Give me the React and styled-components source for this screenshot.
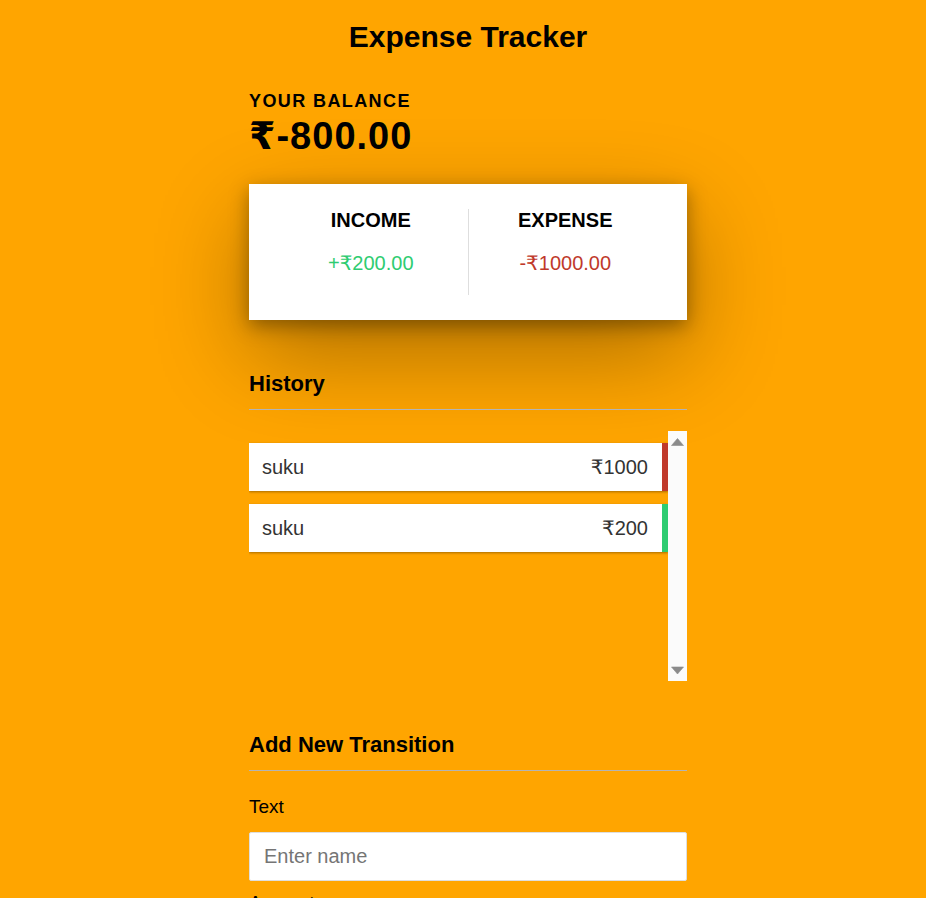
import React from "react";
import styled, { createGlobalStyle } from "styled-components";

const GlobalStyle = createGlobalStyle`
  html {
    scrollbar-width: none;
  }
  body {
    margin: 0;
    padding: 20px 0 0 10px;
    background-color: #ffa500;
    font-family: "Liberation Sans", Arial, "DejaVu Sans", sans-serif;
    color: #000;
  }
  * {
    box-sizing: border-box;
  }
`;

const Container = styled.div`
  width: 438px;
  margin: 0 auto;
`;

const Title = styled.h2`
  margin: 0;
  font-size: 30px;
  line-height: 34px;
  font-weight: 700;
  text-align: center;
`;

const Caption = styled.h4`
  margin: 37px 0 0;
  font-size: 18px;
  line-height: 21px;
  font-weight: 700;
  letter-spacing: 1.4px;
  text-transform: uppercase;
`;

const Balance = styled.h1`
  margin: 3px 0 0;
  font-size: 38px;
  line-height: 42px;
  font-weight: 700;
  letter-spacing: 1px;
`;

const IncExp = styled.div`
  display: flex;
  margin-top: 27px;
  padding: 25px;
  background-color: #fff;
  box-shadow: 0 6px 18px rgba(0, 0, 0, 0.35), 0 34px 95px rgba(0, 0, 0, 0.32);
`;

const Column = styled.div`
  flex: 1;
  text-align: center;
  &:first-of-type {
    border-right: 1px solid #dedede;
  }
`;

const ColumnTitle = styled.h4`
  margin: 0;
  font-size: 20px;
  line-height: 23px;
  font-weight: 700;
  text-transform: uppercase;
`;

const Money = styled.p`
  margin: 20px 0 20px;
  font-size: 20px;
  line-height: 23px;
  color: ${(p) => (p.$plus ? "#2ecc71" : "#c0392b")};
`;

const SectionTitle = styled.h3`
  position: relative;
  margin: ${(p) => p.$top}px 0 0;
  padding-bottom: 13px;
  border-bottom: 1px solid #b4b4b4;
  font-size: 22px;
  line-height: 25px;
  font-weight: 700;
`;

const ScrollArea = styled.div`
  display: flex;
  height: 250px;
  margin-top: 21px;
`;

const List = styled.ul`
  flex: 1;
  list-style: none;
  margin: 0;
  padding: 12px 0 0;
  overflow-y: auto;
  scrollbar-width: none;
  display: flex;
  flex-direction: column;
  gap: 13px;
`;

const Item = styled.li`
  flex-shrink: 0;
  display: flex;
  justify-content: space-between;
  padding: 12px 14px 12px 13px;
  font-size: 20px;
  line-height: 24px;
  color: #333;
  background-color: #fff;
  border-right: 6px solid ${(p) => (p.$plus ? "#2ecc71" : "#c0392b")};
  box-shadow: 0 1px 3px rgba(0, 0, 0, 0.12), 0 1px 2px rgba(0, 0, 0, 0.24);
`;

const ScrollTrack = styled.div`
  width: 19px;
  display: flex;
  flex-direction: column;
  justify-content: space-between;
  background-color: #fbfbfb;
`;

const ScrollButton = styled.button`
  display: block;
  width: 19px;
  height: 19px;
  padding: 0;
  border: 0;
  background: transparent;
  svg {
    display: block;
  }
`;

const Form = styled.form`
  display: flex;
  flex-direction: column;
`;

const Label = styled.label`
  display: block;
  margin: ${(p) => p.$top}px 0 15px;
  font-size: 19px;
  line-height: 21px;
`;

const Input = styled.input`
  display: block;
  width: 100%;
  height: 49px;
  padding: 0 14px;
  border: 1px solid #dedede;
  border-radius: 2px;
  font-family: inherit;
  font-size: 20px;
  color: #333;
  outline: none;
  &::placeholder {
    color: #757575;
  }
`;

const Button = styled.button`
  display: block;
  width: 100%;
  margin: 14px 0 30px;
  padding: 12px;
  border: 0;
  background-color: #9c88ff;
  color: #fff;
  font-family: inherit;
  font-size: 18px;
  cursor: pointer;
`;

const transactions = [
  { id: 1, text: "suku", amount: -1000 },
  { id: 2, text: "suku", amount: 200 },
];

const Arrow = ({ up }) => (
  <svg width="19" height="19" viewBox="0 0 19 19">
    <polygon
      points={up ? "3.5,14.5 9.5,7.5 15.5,14.5" : "3.5,5 15.5,5 9.5,12"}
      fill="#8b8b8b"
      stroke="#8b8b8b"
      strokeWidth="0.6"
      strokeLinejoin="round"
    />
  </svg>
);

export default function App() {
  const income = transactions.filter((t) => t.amount > 0).reduce((a, t) => a + t.amount, 0);
  const expense = transactions.filter((t) => t.amount < 0).reduce((a, t) => a - t.amount, 0);
  const total = income - expense;

  return (
    <>
      <GlobalStyle />
      <Container>
        <Title>Expense Tracker</Title>
        <Caption>Your Balance</Caption>
        <Balance>₹{total.toFixed(2)}</Balance>

        <IncExp>
          <Column>
            <ColumnTitle>Income</ColumnTitle>
            <Money $plus>+₹{income.toFixed(2)}</Money>
          </Column>
          <Column>
            <ColumnTitle>Expense</ColumnTitle>
            <Money>-₹{expense.toFixed(2)}</Money>
          </Column>
        </IncExp>

        <SectionTitle $top={51}>History</SectionTitle>
        <ScrollArea>
          <List>
            {transactions.map((t) => (
              <Item key={t.id} $plus={t.amount > 0}>
                <span>{t.text}</span>
                <span>₹{Math.abs(t.amount)}</span>
              </Item>
            ))}
          </List>
          <ScrollTrack>
            <ScrollButton type="button" aria-label="Scroll up">
              <Arrow up />
            </ScrollButton>
            <ScrollButton type="button" aria-label="Scroll down">
              <Arrow />
            </ScrollButton>
          </ScrollTrack>
        </ScrollArea>

        <SectionTitle $top={51}>Add New Transition</SectionTitle>
        <Form onSubmit={(e) => e.preventDefault()}>
          <Label $top={25} htmlFor="text">Text</Label>
          <Input type="text" id="text" placeholder="Enter name" />
          <Label $top={11} htmlFor="amount">
            Amount <br />
            (negative - expense, positive - income)
          </Label>
          <Input type="number" id="amount" placeholder="Enter amount..." />
          <Button type="submit">Add transaction</Button>
        </Form>
      </Container>
    </>
  );
}
